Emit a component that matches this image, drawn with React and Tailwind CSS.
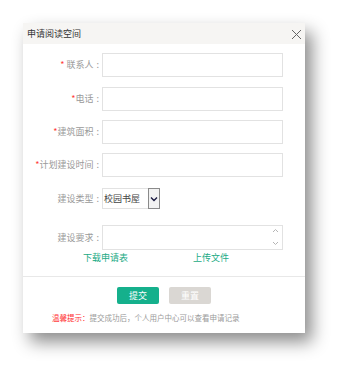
import React from "react";

const font = { fontFamily: '"Noto Sans CJK SC", "Noto Sans", sans-serif' };

function Row({ label, required, children, className = "" }) {
  return (
    <div className={"flex items-center " + className}>
      <div className="w-[79px] pr-[3px] text-right text-[9px] leading-[12px] text-[#9a9a9a] whitespace-nowrap">
        {required && <span className="text-[#ff3b3b]">*</span>}
        {label}
        <span className="ml-[3px]">:</span>
      </div>
      {children}
    </div>
  );
}

export default function App() {
  return (
    <div className="w-[348px] h-[376px] bg-white overflow-hidden" style={font}>
      <div className="ml-[23px] mt-[23px] w-[282px] h-[310px] bg-white flex flex-col shadow-[7px_9px_16px_rgba(0,0,0,0.45)]">
        <div className="h-[21px] bg-[#f6f5f3] flex items-center justify-between pl-[4px] pr-[3px]">
          <span className="text-[9px] text-[#333] leading-[12px]">申请阅读空间</span>
          <svg width="11" height="11" viewBox="0 0 11 11" className="mt-[1px]">
            <path d="M1 1L10 10M10 1L1 10" stroke="#666" strokeWidth="1" />
          </svg>
        </div>
        <div className="flex flex-col">
          <Row label=" 联系人" required className="mt-[9px]">
            <div className="w-[181px] h-[24px] border border-[#e2e2e2]" />
          </Row>
          <Row label="电话" required className="mt-[10px]">
            <div className="w-[181px] h-[24px] border border-[#e2e2e2]" />
          </Row>
          <Row label="建筑面积" required className="mt-[9px]">
            <div className="w-[181px] h-[24px] border border-[#e2e2e2]" />
          </Row>
          <Row label="计划建设时间" required className="mt-[9px]">
            <div className="w-[181px] h-[24px] border border-[#e2e2e2]" />
          </Row>
          <Row label="建设类型" className="mt-[11px]">
            <div className="flex h-[21px]">
              <div className="w-[46px] h-[21px] border border-[#e2e2e2] border-r-0 flex items-center pl-[1px] text-[9px] text-[#444]">
                校园书屋
              </div>
              <div className="w-[12px] h-[21px] border border-[#8a8a8a] bg-[#f2f2f2] flex items-center justify-center">
                <svg width="8" height="6" viewBox="0 0 8 6">
                  <path d="M1 1.5L4 4.5L7 1.5" stroke="#1a1a40" strokeWidth="1.4" fill="none" />
                </svg>
              </div>
            </div>
          </Row>
          <Row label="建设要求" className="mt-[16px]">
            <div className="relative w-[181px] h-[25px] border border-[#e2e2e2]">
              <svg width="7" height="20" viewBox="0 0 7 20" className="absolute right-[3px] top-[1px]">
                <path d="M1 5L3.5 2.5L6 5" stroke="#b5b5b5" strokeWidth="1" fill="none" />
                <path d="M1 15L3.5 17.5L6 15" stroke="#b5b5b5" strokeWidth="1" fill="none" />
              </svg>
            </div>
          </Row>
          <div className="flex mt-[2px] h-[12px] text-[9px] leading-[12px] text-[#1aaa84]">
            <span className="ml-[60px]">下载申请表</span>
            <span className="ml-[65px]">上传文件</span>
          </div>
        </div>
        <div className="mt-[12px] border-t border-[#e8e8e8]" />
        <div className="flex justify-center gap-[10px] mt-[10px]">
          <div className="w-[42px] h-[17px] rounded-[2px] bg-[#15b08c] text-white text-[9px] flex items-center justify-center">
            提交
          </div>
          <div className="w-[42px] h-[17px] rounded-[2px] bg-[#dad7d3] text-white text-[9px] flex items-center justify-center">
            重置
          </div>
        </div>
        <div className="mt-[9px] ml-[29px] text-[7.5px] leading-[10px] whitespace-nowrap">
          <span className="text-[#ff2a2a]">温馨提示：</span>
          <span className="text-[#9a9a9a]">提交成功后，个人用户中心可以查看申请记录</span>
        </div>
      </div>
    </div>
  );
}
